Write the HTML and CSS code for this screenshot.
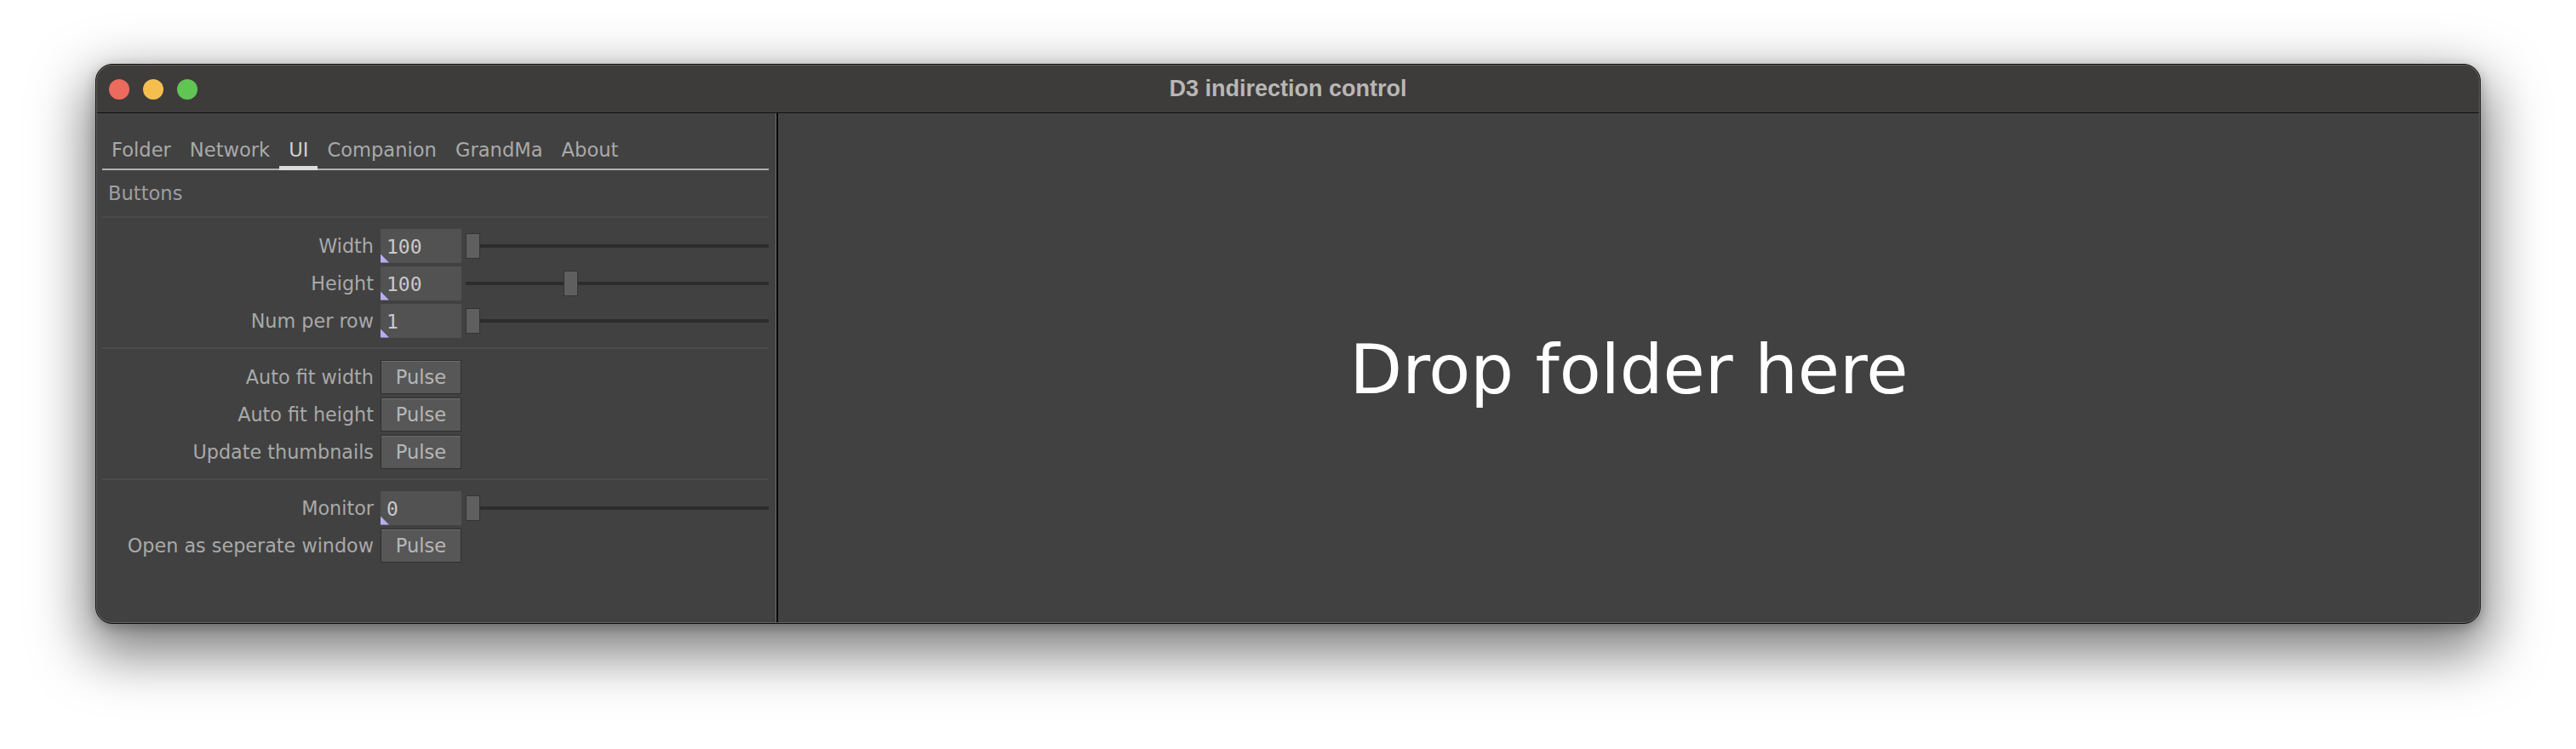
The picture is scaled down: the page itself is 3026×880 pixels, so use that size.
FILE: index.html
```html
<!DOCTYPE html>
<html>
<head>
<meta charset="utf-8">
<title>D3 indirection control</title>
<link rel="stylesheet" href="styles.css">
</head>
<body>
<div class="window">
  <div class="titlebar">
    <div class="lights">
      <span class="light red"></span>
      <span class="light yellow"></span>
      <span class="light green"></span>
    </div>
    <div class="title">D3 indirection control</div>
    <div class="spacer"></div>
  </div>
  <div class="content">
    <div class="panel">
      <div class="tabs">
        <span class="tab">Folder</span>
        <span class="tab">Network</span>
        <span class="tab active">UI</span>
        <span class="tab">Companion</span>
        <span class="tab">GrandMa</span>
        <span class="tab">About</span>
      </div>
      <div class="section-title">Buttons</div>
      <div class="sep"></div>
      <div class="group">
        <div class="row">
          <span class="label">Width</span>
          <span class="field">100</span>
          <span class="slider"><span class="handle" style="left:0px"></span></span>
        </div>
        <div class="row">
          <span class="label">Height</span>
          <span class="field">100</span>
          <span class="slider"><span class="handle" style="left:115px"></span></span>
        </div>
        <div class="row">
          <span class="label">Num per row</span>
          <span class="field">1</span>
          <span class="slider"><span class="handle" style="left:0px"></span></span>
        </div>
      </div>
      <div class="sep"></div>
      <div class="group">
        <div class="row">
          <span class="label">Auto fit width</span>
          <span class="button">Pulse</span>
        </div>
        <div class="row">
          <span class="label">Auto fit height</span>
          <span class="button">Pulse</span>
        </div>
        <div class="row">
          <span class="label">Update thumbnails</span>
          <span class="button">Pulse</span>
        </div>
      </div>
      <div class="sep"></div>
      <div class="group">
        <div class="row">
          <span class="label">Monitor</span>
          <span class="field">0</span>
          <span class="slider"><span class="handle" style="left:0px"></span></span>
        </div>
        <div class="row">
          <span class="label">Open as seperate window</span>
          <span class="button">Pulse</span>
        </div>
      </div>
    </div>
    <div class="divider"></div>
    <div class="drop">
      <span class="drop-text">Drop folder here</span>
    </div>
  </div>
</div>
</body>
</html>
```

FILE: styles.css
```css
* { box-sizing: border-box; }

html, body {
  margin: 0;
  padding: 0;
  background: #ffffff;
}

body {
  width: 3026px;
  height: 880px;
  padding: 75px 112px 0 112px;
  overflow: hidden;
  font-family: "DejaVu Sans", Verdana, sans-serif;
}

.window {
  width: 2802px;
  height: 658px;
  border: 1px solid #0e0e0e;
  border-radius: 20px;
  background: #414141;
  overflow: hidden;
  display: flex;
  flex-direction: column;
  box-shadow: 0 26px 64px 10px rgba(0, 0, 0, 0.5), 0 4px 14px rgba(0, 0, 0, 0.25);
  position: relative;
}

.window::after {
  content: "";
  position: absolute;
  inset: 0;
  border-radius: 19px;
  box-shadow: inset 0 0 0 1px #626262;
  pointer-events: none;
}

.titlebar {
  height: 57px;
  flex: none;
  background: #3d3c3b;
  border-bottom: 1px solid #121212;
  display: grid;
  grid-template-columns: 1fr auto 1fr;
  align-items: center;
}

.lights {
  display: flex;
  gap: 16px;
  padding-left: 15px;
  padding-top: 1px;
}

.light {
  width: 24px;
  height: 24px;
  border-radius: 50%;
  display: block;
}
.red { background: #ed6a5e; }
.yellow { background: #f5bf4f; }
.green { background: #61c554; }

.title {
  font-family: "Liberation Sans", Arial, sans-serif;
  font-weight: bold;
  font-size: 27px;
  color: #b9b7b5;
  line-height: 30px;
  padding-bottom: 1px;
}

.content {
  flex: 1;
  display: flex;
  min-height: 0;
}

.panel {
  width: 799px;
  flex: none;
  padding: 0 8px 0 7px;
  border-right: 1px solid #6e6e6e;
  background: #414141;
}

.divider {
  width: 2px;
  flex: none;
  background: #050505;
}

.drop {
  flex: 1;
  display: flex;
  align-items: center;
  justify-content: center;
  background: #414141;
}

.drop-text {
  font-size: 80px;
  color: #ffffff;
  line-height: 1;
  padding-top: 4px;
}

.tabs {
  display: flex;
  margin-top: 28px;
  border-bottom: 2px solid #b2b2b2;
}

.tab {
  position: relative;
  font-size: 22.6px;
  line-height: 30px;
  padding: 0 11px 7px 11px;
  color: #a9a9a9;
}

.tab.active {
  color: #d2d2d2;
}

.tab.active::after {
  content: "";
  position: absolute;
  left: 0;
  right: 0;
  bottom: -2px;
  height: 5px;
  background: #dcdcdc;
}

.section-title {
  font-size: 22.6px;
  line-height: 30px;
  color: #9f9f9f;
  padding: 12px 0 0 7px;
  margin-bottom: 12px;
}

.sep {
  height: 2px;
  background: #4b4b4b;
}

.group {
  display: flex;
  flex-direction: column;
  gap: 4px;
  padding: 12px 0;
}

.row {
  display: grid;
  grid-template-columns: 327px 95px 1fr;
  height: 40px;
  align-items: center;
}

.label {
  text-align: right;
  padding-right: 8px;
  padding-top: 1px;
  font-size: 22.3px;
  line-height: 40px;
  color: #a9a9a9;
  white-space: nowrap;
}

.field {
  position: relative;
  height: 40px;
  background: #525252;
  font-family: "DejaVu Sans Mono", monospace;
  font-size: 23px;
  line-height: 40px;
  color: #c9c9c9;
  padding-left: 7px;
  padding-top: 1px;
}

.field::after {
  content: "";
  position: absolute;
  left: 0;
  bottom: 0;
  width: 10px;
  height: 10px;
  background: #b9abf4;
  clip-path: polygon(0 0, 0 100%, 100% 100%);
}

.slider {
  position: relative;
  height: 40px;
  margin-left: 5px;
  display: flex;
  align-items: center;
}

.slider::before {
  content: "";
  display: block;
  width: 100%;
  height: 4px;
  background: #2c2c2c;
}

.handle {
  position: absolute;
  top: 5px;
  width: 17px;
  height: 30px;
  background: #5f5f5f;
  border: 1px solid #333333;
}

.button {
  height: 40px;
  background: #575757;
  border: 1px solid #2f2f2f;
  box-shadow: inset 0 1px 0 #6d6d6d;
  font-size: 22.6px;
  line-height: 38px;
  text-align: center;
  color: #b6b6b6;
}
```
